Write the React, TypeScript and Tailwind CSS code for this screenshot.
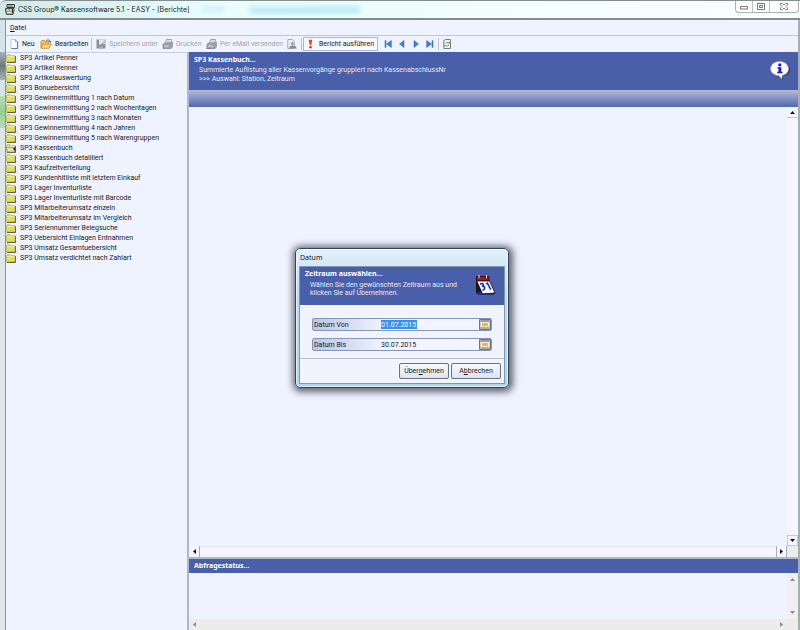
import type { ReactNode } from 'react';

const reports = [
  'SP3 Artikel Penner',
  'SP3 Artikel Renner',
  'SP3 Artikelauswertung',
  'SP3 Bonuebersicht',
  'SP3 Gewinnermittlung 1 nach Datum',
  'SP3 Gewinnermittlung 2 nach Wochentagen',
  'SP3 Gewinnermittlung 3 nach Monaten',
  'SP3 Gewinnermittlung 4 nach Jahren',
  'SP3 Gewinnermittlung 5 nach Warengruppen',
  'SP3 Kassenbuch',
  'SP3 Kassenbuch detailliert',
  'SP3 Kaufzeitverteilung',
  'SP3 Kundenhitliste mit letztem Einkauf',
  'SP3 Lager Inventurliste',
  'SP3 Lager Inventurliste mit Barcode',
  'SP3 Mitarbeiterumsatz einzeln',
  'SP3 Mitarbeiterumsatz im Vergleich',
  'SP3 Seriennummer Belegsuche',
  'SP3 Uebersicht Einlagen Entnahmen',
  'SP3 Umsatz Gesamtuebersicht',
  'SP3 Umsatz verdichtet nach Zahlart',
];

function AppIcon() {
  return (
    <svg width="10" height="11" viewBox="0 0 10 11" aria-hidden="true">
      <path d="M2 .5h7.500v3H2z" fill="#d8dcd0" stroke="#33382f" />
      <path d="M3 2h5" stroke="#4b7a3c" />
      <path d="M.5 4.500h8.500v2L8 10.500H1.500L.5 7z" fill="#a3a596" stroke="#33362e" strokeWidth=".8" />
      <path d="M2 6h1.500M5 6h1.500M2.500 8.500h4" stroke="#f2f2e2" />
      <path d="M7.500 5v4" stroke="#2c3140" />
    </svg>
  );
}

function FolderIcon({ open }: { open?: boolean }) {
  return (
    <svg width="10" height="9" viewBox="0 0 10 9" aria-hidden="true" className="shrink-0">
      <path d="M1 8.500h8.500V2" fill="none" stroke="#55552e" />
      <path d="M.5 7.700v-6L1 .7h3l1 1h4v6z" fill={open ? '#d5d38a' : '#dede5c'} stroke="#b0b060" strokeWidth=".7" />
      <path d="M1.200 2.700h7" stroke="#f0f09a" />
      {open && <path d="M0 3.500h6.500L9 8H2z" fill="#e8e6b4" stroke="#8f8d68" strokeWidth=".7" />}
      {open && <path d="M7 4l2.500 4V3z" fill="#33331f" />}
    </svg>
  );
}

function PageIcon() {
  return (
    <svg width="9" height="10" viewBox="0 0 9 10" aria-hidden="true">
      <path d="M1 .5h4.500l2 2v7H1z" fill="#fff" stroke="#b5c2d8" strokeWidth=".8" />
      <path d="M7.600 3v6.600H1.500" fill="none" stroke="#5873a3" />
      <path d="M5.500.5v2h2" fill="#dce6f5" stroke="#6d85b0" strokeWidth=".8" />
    </svg>
  );
}

function EditFolderIcon() {
  return (
    <svg width="12" height="10" viewBox="0 0 12 10" aria-hidden="true" className="shrink-0">
      <path d="M1 9V2.500l1-1h2.500l1 1h3V5" fill="#f1c65a" stroke="#b98a24" strokeWidth=".8" />
      <path d="M1 9.300L3 5h8.300L9 9.300z" fill="#fbd76e" stroke="#c08b1d" strokeWidth=".8" />
      <path d="M6 2.200C7 .4 9 .4 10 2" fill="none" stroke="#4a6fb0" />
      <path d="M8.600 2h2.600l-.4 2.200z" fill="#4a6fb0" />
    </svg>
  );
}

function SaveIcon() {
  return (
    <svg width="10" height="10" viewBox="0 0 10 10" aria-hidden="true">
      <path d="M.5.5h9v9h-9z" fill="#8d8f95" />
      <path d="M3 .5h6.500L5 5.500H3z" fill="#e3e5ec" />
      <path d="M9.500.5v5L6 5z" fill="#c3c5cc" />
      <path d="M3 7.500h4v2H3z" fill="#a9abb2" />
    </svg>
  );
}

function PrinterIcon({ mail }: { mail?: boolean }) {
  return (
    <svg width="11" height="10" viewBox="0 0 11 10" aria-hidden="true">
      <path d="M3 5L4.500.5h5L8.500 5z" fill="#eceef4" stroke="#8a8c92" strokeWidth=".8" />
      <path d="M1 5.500L2.500 4H9l1.300-1v5L9 9.500H1z" fill="#a2a4a9" stroke="#85878d" strokeWidth=".8" />
      <path d="M5 2.200h3M4.700 3.500h3" stroke="#a2a4a9" strokeWidth=".6" />
      <path d="M2.500 6.500h4v1.500h-4z" fill={mail ? '#f1f2f7' : '#c9cbd0'} />
      {mail && <path d="M2.500 6.500l2 1.300 2-1.300M0 9.500h5" fill="none" stroke="#77797f" strokeWidth=".6" />}
    </svg>
  );
}

function PreviewIcon() {
  return (
    <svg width="10" height="10" viewBox="0 0 10 10" aria-hidden="true">
      <path d="M.8.5h4.500l2 2v7H.8z" fill="#eff0f5" stroke="#97999f" strokeWidth=".8" />
      <circle cx="5.300" cy="4.800" r="1.700" fill="#a2a4aa" />
      <path d="M2 9.200l1.500-2.500H8l2 2.800z" fill="#888a90" />
    </svg>
  );
}

function AlertIcon() {
  return (
    <svg width="5" height="10" viewBox="0 0 5 10" aria-hidden="true">
      <path d="M.7 1.500Q2.500-.3 4.300 1.500L3.200 6H1.800z" fill="#d9472b" />
      <circle cx="2.500" cy="8.200" r="1.300" fill="#c93a22" />
    </svg>
  );
}

function NavIcon({ back, end }: { back?: boolean; end?: boolean }) {
  return (
    <svg width="8" height="8" viewBox="0 0 8 8" aria-hidden="true" className={back ? 'rotate-180' : ''}>
      <path d={end ? 'M.6.5l5 3.500-5 3.500z' : 'M2 .5L6.500 4 2 7.500z'} fill="#3f7fd6" stroke="#2f66bb" strokeWidth=".5" />
      {end && <path d="M6.500.3v7.400" stroke="#3a70c0" strokeWidth="1.500" />}
    </svg>
  );
}

function RefreshPageIcon() {
  return (
    <svg width="9" height="10" viewBox="0 0 9 10" aria-hidden="true">
      <path d="M.8 1.500L2.500.5h5v9H.8z" fill="#f0f3ee" stroke="#667080" strokeWidth=".9" />
      <path d="M2.500 4.500Q4 2.500 6 4M6 6Q4.500 8 2.500 6.500" fill="none" stroke="#6aa04a" />
      <path d="M5 4.500h2V2.500zM3.500 6h-2v2z" fill="#6aa04a" />
    </svg>
  );
}

function InfoIcon() {
  return (
    <svg width="21" height="20" viewBox="0 0 21 20" aria-hidden="true">
      <path d="M11 1.500c5 0 9 3 9 7 0 3.500-3 6-6.500 6.800L12.500 19 10 15.600C5 15.400 2 12.500 2 9z" fill="#343a4c" />
      <path d="M9.500.5c5 0 9 3 9 7.200 0 3.600-2.800 6-6.200 6.700l-.6 3.400-3-3.200C4 14.200.6 11.500.6 7.700.6 3.600 4.500.5 9.500.5z" fill="#fff" stroke="#a9acb8" strokeWidth=".7" />
      <circle cx="9.800" cy="3.900" r="1.600" fill="#1518cf" />
      <path d="M7.300 6.200h4v4.600h1.300v1.400H7.200v-1.400h1.300V7.600H7.300z" fill="#1518cf" />
    </svg>
  );
}

function CalendarIcon() {
  return (
    <svg width="21" height="21" viewBox="0 0 21 21" aria-hidden="true">
      <path d="M1 2h13v16.500H1z" fill="#15151c" />
      <path d="M2 17h14l-1 3H3z" fill="#1b2b9c" />
      <path d="M1.500 1.500h12.500v4.500H1.500z" fill="#a11a22" stroke="#1a0b10" strokeWidth=".8" />
      <path d="M4 0v3M11.500 0v3" stroke="#e8e8f0" />
      <path d="M1.800 6h12.700l5.500 12-12.500.8z" fill="#fff" stroke="#111" strokeWidth=".8" />
      <path d="M5 9.200c3-1.800 4.500.8 2.200 2 3-.3 3.500 3.500.3 3.900M11.200 9.200l1.300-1 3.200 6.500" fill="none" stroke="#2029bd" strokeWidth="1.600" />
      <path d="M15.500 19.500l4.500-1.200" stroke="#111" />
    </svg>
  );
}

function PickerIcon() {
  return (
    <svg width="12" height="11" viewBox="0 0 12 11" aria-hidden="true">
      <path d="M.5.5h11v10H.5z" fill="#d0cec6" stroke="#6c7890" />
      <path d="M2 3h8v5H2z" fill="#fff3b8" />
      <path d="M1.500 2h9" stroke="#5b6f9c" />
      <path d="M3.500 4v3.500M8.500 4v3.500" stroke="#d3b765" strokeWidth=".8" />
      <path d="M5 4v3M7 4v3" stroke="#c0603a" strokeWidth=".9" />
      <path d="M1.500 9h9" stroke="#8b8a86" />
    </svg>
  );
}

function Arrow({ dir, faint }: { dir: 'up' | 'down' | 'left' | 'right'; faint?: boolean }) {
  const d = { up: 'M0 4l2.500-3L5 4z', down: 'M0 1l2.500 3L5 1z', left: 'M4 0L1 2.500 4 5z', right: 'M1 0l3 2.500L1 5z' }[dir];
  return (
    <svg width="5" height="5" viewBox="0 0 5 5" aria-hidden="true">
      <path d={d} fill={faint ? '#8c8c90' : '#111'} />
    </svg>
  );
}

function Tool({ width, icon, label, disabled }: { width: string; icon: ReactNode; label: string; disabled?: boolean }) {
  return (
    <button type="button" disabled={disabled} className={`flex shrink-0 items-center gap-[3px] whitespace-nowrap disabled:text-[#a3a4aa] ${width}`}>
      {icon}
      <span>{label}</span>
    </button>
  );
}

function Divider() {
  return <div className="h-3 w-px shrink-0 bg-[#bcc3d3]" />;
}

function DateField({ id, label, value, selected }: { id: string; label: string; value: string; selected?: boolean }) {
  return (
    <div className="flex h-[13px] items-center rounded-xs border border-[#8794b8] bg-linear-to-r from-[#bdc6e0] via-[#f1f3ff] via-40% to-[#f3f5ff]">
      <label htmlFor={id} className="w-[68px] shrink-0 pl-px">{label}</label>
      <input
        id={id}
        type="text"
        defaultValue={value}
        className={`h-[9px] w-[36px] p-0 outline-none ${selected ? 'bg-[#3192f0] text-white' : 'bg-transparent'}`}
      />
      <button type="button" aria-label={`${label} wählen`} className="ml-auto shrink-0"><PickerIcon /></button>
    </div>
  );
}

function Dialog() {
  return (
    <section
      role="dialog"
      aria-labelledby="dialog-title"
      className="absolute top-[248px] left-[295px] w-[214px] rounded-[5px] border border-[#334653] bg-linear-to-b from-[#e4f0fb] via-[#c0dcf1] via-30% to-[#b2d4ed] px-[3px] pb-[3px] shadow-[1px_1px_7px_3px_rgba(20,24,36,0.65)] ring-1 ring-white/60 ring-inset"
    >
      <h2 id="dialog-title" className="flex h-[17px] items-center pl-px font-['Noto_Sans',sans-serif] text-[7px]">Datum</h2>
      <div className="border border-[#8296ad] bg-[#f1f3ff]">
        <header className="flex h-[38px] justify-between bg-[#4a5fa9] pr-2 pl-[5px] text-white">
          <div>
            <h3 className="mt-[2px] font-['Noto_Sans',sans-serif] text-[7px] leading-[9px] font-bold">Zeitraum auswählen...</h3>
            <p className="mt-[3px] ml-[5px] leading-[8px] text-[#e4e8f8]">
              Wählen Sie den gewünschten Zeitraum aus und
              <br />
              klicken Sie auf Übernehmen.
            </p>
          </div>
          <div className="mt-2"><CalendarIcon /></div>
        </header>
        <div className="flex h-[54px] flex-col gap-[7px] border-b border-[#b9bfcf] px-3 pt-[13px]">
          <DateField id="von" label="Datum Von" value="01.07.2015" selected />
          <DateField id="bis" label="Datum Bis" value="30.07.2015" />
        </div>
        <footer className="flex h-6 justify-end gap-[2px] px-[3px] pt-1">
          <button type="button" className="h-4 w-[50px] rounded-xs border border-[#67728c] bg-linear-to-b from-[#f7f8fc] to-[#dfe3ee]">
            Über<u>n</u>ehmen
          </button>
          <button type="button" className="h-4 w-[50px] rounded-xs border border-[#67728c] bg-linear-to-b from-[#f7f8fc] to-[#dfe3ee]">
            A<u>b</u>brechen
          </button>
        </footer>
      </div>
    </section>
  );
}

export default function App() {
  return (
    <div className="relative flex h-screen flex-col overflow-hidden bg-[#eff2ff] font-['Roboto','Liberation_Sans',sans-serif] text-[7px] leading-[10px] text-[#181a24]">
      <header className="flex h-5 shrink-0 items-start justify-between rounded-tl-md border-t border-b-2 border-[#858d91] bg-linear-to-r from-[#cfe9ea] via-[#e8fdfb] via-25% to-[#fbffff] pl-[5px]">
        <div className="flex h-[17px] items-center gap-[3px]">
          <AppIcon />
          <h1 className="font-['Inter','Noto_Sans',sans-serif] text-[7px] whitespace-nowrap">CSS Group® Kassensoftware 5.1 - EASY - [Berichte]</h1>
          <div className="ml-2 flex items-center gap-6 blur-[2px]" aria-hidden="true">
            <div className="h-[5px] w-6 rounded bg-[#d3eefa]" />
            <div className="h-2 w-28 rounded bg-[#c0edf8]" />
          </div>
        </div>
        <div className="mr-px flex h-3 shrink-0 divide-x divide-[#b7c0c5] rounded-b border border-t-0 border-[#a9b1b6] bg-white text-[#777]">
          <button type="button" aria-label="Minimieren" className="flex w-[17px] items-center justify-center">
            <svg width="8" height="7"><path d="M.5 3.500h7v2.500h-7z" fill="#fff" stroke="currentColor" /></svg>
          </button>
          <button type="button" aria-label="Wiederherstellen" className="flex w-[17px] items-center justify-center">
            <svg width="8" height="7"><path d="M.5.5h7v6h-7zM2.500 2.500h3v2h-3z" fill="#fff" stroke="currentColor" /></svg>
          </button>
          <button type="button" aria-label="Schließen" className="flex w-7 items-center justify-center">
            <svg width="8" height="7" viewBox="0 0 8 7">
              <path d="M.5.5h2L4 2 5.500.5h2v1.500L6 3.500 7.500 5v1.500h-2L4 5 2.500 6.500h-2V5L2 3.500.5 2z" fill="#fff" stroke="currentColor" strokeWidth=".9" />
            </svg>
          </button>
        </div>
      </header>

      <div className="flex min-h-0 grow border-r-2 border-[#a5afb0]">
        <div className="flex w-[6px] shrink-0 flex-col border-r border-[#8b969c]">
          <div className="h-8 bg-[#d5e4e6]" />
          <div className="h-7 bg-linear-to-b from-[#a9b4b8] via-[#6e797e] to-[#a9b4b8]" />
          <div className="h-4 bg-[#d5e4e6]" />
          <div className="h-8 bg-linear-to-b from-[#b9dcbb] via-[#94cf92] to-[#b9dcbb]" />
          <div className="grow bg-[#dde7ea]" />
        </div>

        <div className="flex min-w-0 grow flex-col">
          <nav className="flex h-4 shrink-0 items-center border-b border-[#c2c6d2] pl-1">
            <button type="button"><u>D</u>atei</button>
          </nav>
          <div role="toolbar" className="flex h-4 shrink-0 items-center pl-1">
            <Tool width="w-[30px]" icon={<PageIcon />} label="Neu" />
            <Tool width="w-[51px]" icon={<EditFolderIcon />} label="Bearbeiten" />
            <Divider />
            <Tool width="ml-1 w-[66px]" icon={<SaveIcon />} label="Speichern unter" disabled />
            <Tool width="w-[44px]" icon={<PrinterIcon />} label="Drucken" disabled />
            <Tool width="w-[81px]" icon={<PrinterIcon mail />} label="Per eMail versenden" disabled />
            <button type="button" disabled aria-label="Vorschau" className="w-[14px] shrink-0"><PreviewIcon /></button>
            <Divider />
            <button type="button" className="ml-px flex h-[14px] w-[75px] shrink-0 items-center gap-[6px] border border-[#b0b8ca] bg-[#f6f8ff] pl-1 whitespace-nowrap">
              <AlertIcon />
              <span>Bericht ausführen</span>
            </button>
            <div className="mr-1 ml-[6px] flex shrink-0 gap-[6px]">
              <button type="button" aria-label="Erste Seite"><NavIcon back end /></button>
              <button type="button" aria-label="Vorherige Seite"><NavIcon back /></button>
              <button type="button" aria-label="Nächste Seite"><NavIcon /></button>
              <button type="button" aria-label="Letzte Seite"><NavIcon end /></button>
            </div>
            <Divider />
            <button type="button" aria-label="Aktualisieren" className="ml-1 shrink-0"><RefreshPageIcon /></button>
          </div>

          <div className="flex min-h-0 grow">
            <aside className="w-[183px] shrink-0 border-t border-r-2 border-t-[#c9cede] border-r-[#adb7d2]">
              <ul>
                {reports.map((name) => (
                  <li key={name}>
                    <button type="button" className="flex h-[10px] items-center gap-1 whitespace-nowrap">
                      <FolderIcon open={name === 'SP3 Kassenbuch'} />
                      <span>{name}</span>
                    </button>
                  </li>
                ))}
              </ul>
            </aside>

            <main className="flex min-w-0 grow flex-col">
              <header className="flex h-[38px] shrink-0 justify-between bg-[#4a5fa9] pr-[7px] pl-[5px] text-white">
                <div>
                  <h2 className="mt-[3px] font-['Noto_Sans',sans-serif] text-[7px] leading-[9px] font-bold">SP3 Kassenbuch...</h2>
                  <p className="mt-[2px] ml-[5px] leading-[9px] text-[#e4e8f8]">
                    Summierte Auflistung aller Kassenvorgänge gruppiert nach KassenabschlussNr
                    <br />
                    &gt;&gt;&gt; Auswahl: Station, Zeitraum
                  </p>
                </div>
                <div className="mt-[9px]"><InfoIcon /></div>
              </header>
              <div className="h-[17px] shrink-0 bg-linear-to-b from-[#b5bbd9] to-[#5468ae]" />

              <div className="flex min-h-0 grow">
                <div className="grow" />
                <div className="flex w-[11px] flex-col justify-between bg-[#f4f6ff]">
                  <button type="button" aria-label="Nach oben" className="flex h-[11px] items-center justify-center border-b border-[#c5c8d2]"><Arrow dir="up" /></button>
                  <button type="button" aria-label="Nach unten" className="flex h-[11px] items-center justify-center border border-[#c5c8d2]"><Arrow dir="down" /></button>
                </div>
              </div>
              <div className="flex h-[11px] shrink-0 bg-[#f4f6ff]">
                <button type="button" aria-label="Nach links" className="flex w-[11px] items-center justify-center border-r border-[#a9adb8]"><Arrow dir="left" /></button>
                <div className="grow border-t border-[#e3e6f2]" />
                <button type="button" aria-label="Nach rechts" className="flex w-[11px] items-center justify-center border-x border-[#a9adb8]"><Arrow dir="right" /></button>
                <div className="w-[11px] bg-[#ececee]" />
              </div>

              <section className="shrink-0 border-t-2 border-[#adb7d2]">
                <h2 className="flex h-[14px] items-center bg-[#4a5fa9] pl-[5px] font-['Noto_Sans',sans-serif] text-[7px] font-bold text-white">Abfragestatus...</h2>
                <div className="flex h-[46px]">
                  <div className="grow" />
                  <div className="flex w-[11px] flex-col items-center justify-between bg-[#f0f0f1] py-1">
                    <Arrow dir="up" faint />
                    <Arrow dir="down" faint />
                  </div>
                </div>
                <div className="flex h-[11px] items-center justify-between bg-[#ececed] pr-[14px] pl-[3px]">
                  <Arrow dir="left" faint />
                  <Arrow dir="right" faint />
                </div>
              </section>
            </main>
          </div>
        </div>
      </div>

      <Dialog />
    </div>
  );
}
